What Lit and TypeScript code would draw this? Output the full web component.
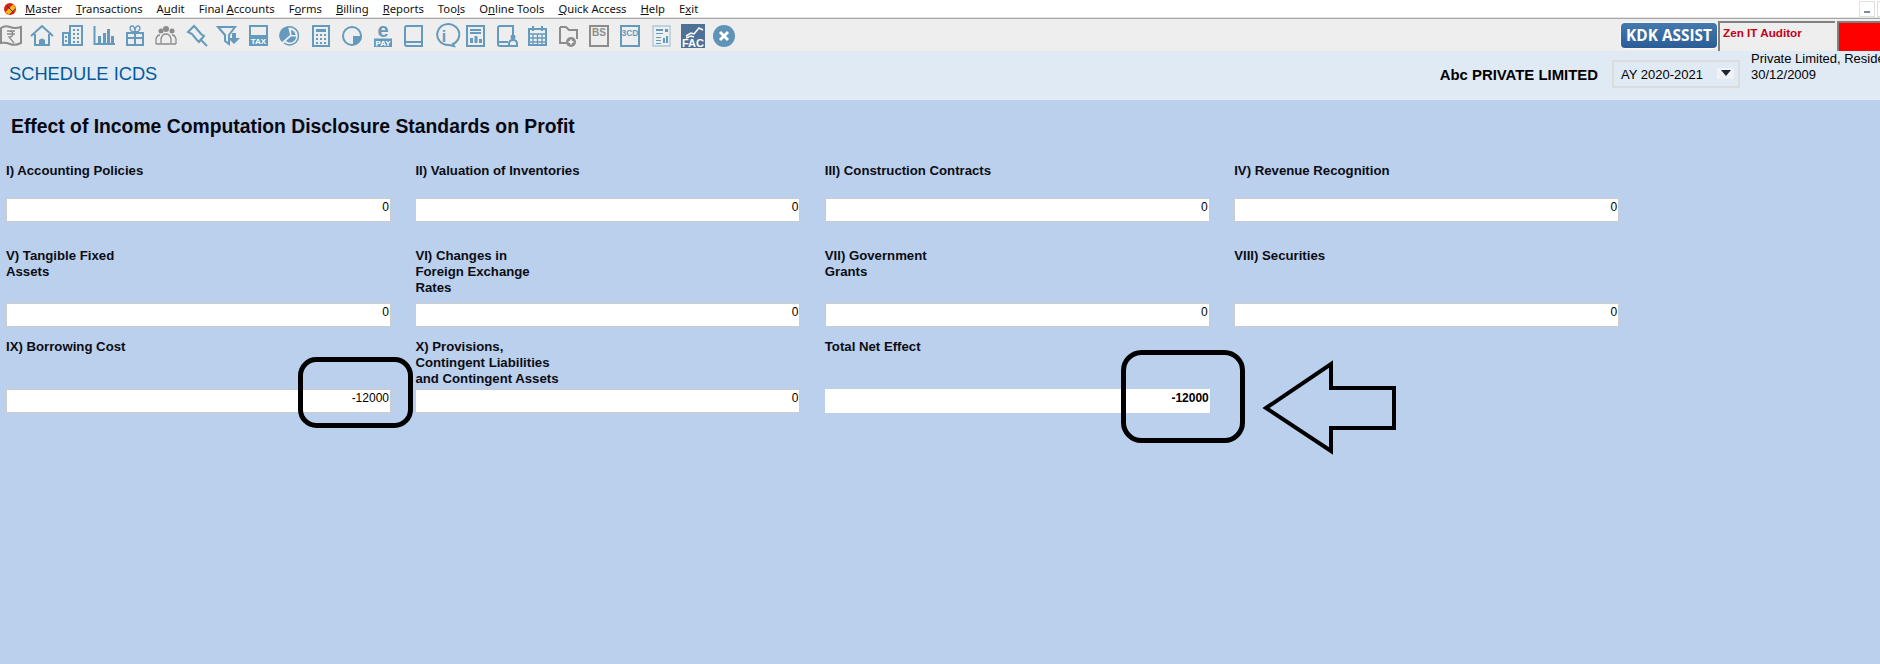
import { LitElement, html, css, svg } from "lit";
import { customElement } from "lit/decorators.js";

const menu: [string, string, string][] = [
  ["", "M", "aster"], ["", "T", "ransactions"], ["A", "u", "dit"], ["Final ", "A", "ccounts"],
  ["F", "o", "rms"], ["", "B", "illing"], ["", "R", "eports"], ["Too", "l", "s"],
  ["O", "n", "line Tools"], ["", "Q", "uick Access"], ["", "H", "elp"], ["E", "x", "it"],
];

const icons = [
  svg`<g class="g"><path d="M1 4Q5 1 10 3T21 3V19Q15 22 10 20T1 19Z"/><path class="thin" d="M7 7h8M7 10h8M9 7c5 0 5 6 0 6l5 6"/></g>`,
  svg`<g class="b"><path d="M0 12L11 2L22 12M4 10V21H18V10"/><path class="f" d="M8 21v-5q3-3 6 0v5z"/></g>`,
  svg`<g class="b"><path d="M1 9h6v12H1zM8 2h12v19H8z"/><path class="dots" d="M11 5h2v2h-2zM15 5h2v2h-2zM11 9h2v2h-2zM15 9h2v2h-2zM11 13h2v2h-2zM15 13h2v2h-2zM11 17h2v2h-2zM15 17h2v2h-2zM3 12h2v2H3zM3 16h2v2H3z"/></g>`,
  svg`<g class="b"><path d="M1.500 2V20H22"/><path class="f" d="M5 12h3v7H5zM10 9h3v10h-3zM14 5h3v14h-3zM18 12h3v7h-3z"/></g>`,
  svg`<g class="b"><path d="M3 9h16v12H3zM3 14h16M11 9v12"/><path class="thin" d="M11 8C5 8 5 2 8 2s3 4 3 6c0-2 0-6 3-6s3 6-3 6"/></g>`,
  svg`<g class="g"><circle class="f" cx="6" cy="7" r="2.500"/><circle class="f" cx="11" cy="5" r="3"/><circle class="f" cx="17" cy="7" r="2.500"/><path class="thin" d="M1 20v-5q1-4 4-4M21 20v-5q-1-4-4-4M1 20h20M6 19v-4q1-5 5-5t5 5v4"/></g>`,
  svg`<g class="b"><path d="M8 2L2 8L6 10L11 16L13 18L18 12L15 10L10 4Z"/><path d="M14 15L21 22"/></g>`,
  svg`<g class="b"><path d="M1 3H18L12 11V20L8 17V11Z"/><path class="f" d="M15 9h4v5h4l-6 6-6-6h4z"/></g>`,
  svg`<g class="b"><path d="M2 2h17v19H2z"/><path class="f" d="M2 11h17v10H2z"/><text class="wt" x="10.500" y="19.500" font-size="8">TAX</text></g>`,
  svg`<g class="b"><path class="thin2" d="M7 3.500A9 9 0 1 1 5 19"/><path class="f" d="M9 2.500A9 9 0 0 0 3 18L11 11ZM12 6A6 6 0 0 1 16.500 11L12.500 11Z"/><path class="f" d="M12 12.500L17 12.500A6 6 0 0 1 7 17z"/></g>`,
  svg`<g class="b"><path d="M3 2h16v20H3z"/><path class="f" d="M6 5h10v3H6z"/><path class="dots" d="M6 10h2v2H6zM10 10h2v2h-2zM14 10h2v2h-2zM6 14h2v2H6zM10 14h2v2h-2zM14 14h2v2h-2zM6 18h2v2H6zM10 18h2v2h-2zM14 18h2v2h-2z"/></g>`,
  svg`<g class="b"><circle cx="11" cy="12" r="9"/><path class="f" d="M12 12h9a9 9 0 0 1-9 9z"/></g>`,
  svg`<g class="b"><text class="be" x="11" y="13" font-size="20">e</text><path class="f" d="M2 14.500h18v8.500H2z"/><text class="wt" x="11" y="22" font-size="8">PAY</text></g>`,
  svg`<g class="b"><path d="M2 4q0-2 2-2h15v20H4q-2 0-2-2zM2 18h17"/></g>`,
  svg`<g class="b"><path d="M20 21A11 10.500 0 1 0 16 22L21 23Z" transform="translate(-1 -1)"/><text class="bt" x="10" y="18" font-size="16">i</text></g>`,
  svg`<g class="b"><path d="M2 2h17v20H2zM5 6h11M5 9h11"/><path class="f" d="M5 14h3v5H5zM9.500 12h3v7h-3zM14 15h3v4h-3z"/></g>`,
  svg`<g class="b"><path d="M13 22H4q-2 0-2-2V4q0-2 2-2h13v9M2 18h10"/><circle class="f" cx="17" cy="13" r="2.500"/><path d="M13 22v-2q0-4 4-4t4 4v2z"/></g>`,
  svg`<g class="b"><path d="M2 5h17v16H2z"/><path class="thin" d="M2 10h17M2 14h17M2 18h17M6 10v10M10.500 10v10M15 10v10"/><path d="M6 2v5M15 2v5"/></g>`,
  svg`<g class="g"><path d="M2 3h6l3 3h8v9M8 19H2V3"/><circle class="f" cx="13" cy="18" r="5"/><path class="wl" d="M10.500 18h5M13 15.500v5"/></g>`,
  svg`<g class="g"><path d="M1 2h18v20H1z"/><text class="gt" x="10" y="12" font-size="10">BS</text></g>`,
  svg`<g class="b"><path d="M1 2h18v20H1z"/><text class="bt" x="10" y="12" font-size="8.500">3CD</text></g>`,
  svg`<g class="b lite"><path class="thin" d="M2 2h17v20H2z"/><path class="f" d="M5 5h7v2H5zM5 9h7v1H5zM14 5h3v3h-3zM5 13h5v1H5zM5 16h5v1H5zM12 14h2v5h-2zM15 12h2v7h-2zM5 19h5v1H5z"/></g>`,
  svg`<g><path class="fac" d="M-1 0h24v24h-24z"/><path class="wl" d="M4 12l5-3 3 1 5-6 4 2M4 14l5-2 3 1"/><text class="wt" x="11" y="23" font-size="11">FAC</text></g>`,
  svg`<g><circle class="xc" cx="11" cy="12" r="11"/><path class="xl" d="M7 8l8 8M15 8l-8 8"/></g>`,
];

const rows = [
  { cls: "r1", cells: [["I) Accounting Policies", "0"], ["II) Valuation of Inventories", "0"], ["III) Construction Contracts", "0"], ["IV) Revenue Recognition", "0"]] },
  { cls: "r2", cells: [["V) Tangible Fixed\nAssets", "0"], ["VI) Changes in\nForeign Exchange\nRates", "0"], ["VII) Government\nGrants", "0"], ["VIII) Securities", "0"]] },
  { cls: "r3", cells: [["IX) Borrowing Cost", "-12000"], ["X) Provisions,\nContingent Liabilities\nand Contingent Assets", "0"], ["Total Net Effect", "-12000", "total"]] },
];

@customElement("app-root")
export class AppRoot extends LitElement {
  static styles = css`
    :host { display: block; width: 1880px; height: 664px; overflow: hidden; position: relative; background: #bad0ec; font-family: "Liberation Sans", Arial, sans-serif; color: #000; }
    .menubar { height: 17px; background: #fff; display: flex; align-items: center; position: relative; padding-left: 3px; }
    .logo { width: 14px; height: 14px; margin-right: 8px; flex: none; }
    .menu { display: flex; gap: 14px; font: 11.25px/17px "Noto Sans", sans-serif; color: #111; }
    .winbtns { margin-left: auto; display: flex; gap: 2px; align-self: flex-start; margin-top: 1px; width: 21px; overflow: hidden; }
    .winbtn { flex: none; width: 16px; height: 16px; box-sizing: border-box; border: 1px solid #e0e0e0; display: flex; align-items: flex-end; justify-content: center; padding-bottom: 3px; }
    .winbtn i { display: block; width: 6px; height: 2px; background: #7f8c99; }
    .sep { height: 1px; background: #e4e4e4; }
    .toolbar { height: 33px; box-sizing: border-box; background: #eee; border-top: 1px solid #a8a8a8; display: flex; position: relative; }
    .icons { display: flex; gap: 9px; padding-top: 5px; }
    .icons svg { width: 22px; height: 24px; overflow: visible; flex: none; }
    .tools-right { margin-left: auto; display: flex; align-items: stretch; padding-top: 2px; }
    .kdk { width: 96px; height: 25px; box-sizing: border-box; margin: 2px 1px 0 0; border-radius: 4px; background: linear-gradient(#4579ae, #2a5c96); color: #fff; font: 700 15.4px/25px "Open Sans", sans-serif; text-align: center; box-shadow: 0 0 0 1px #f6f8fb; white-space: nowrap; }
    .zen { width: 117px; margin-right: 2px; box-sizing: border-box; border-top: 2px solid #808080; border-left: 2px solid #808080; background: #eee; color: #c4001a; font: 700 11.7px/20px "Liberation Sans", sans-serif; padding-left: 3px; }
    .red { width: 43px; box-sizing: border-box; border-top: 2px solid #808080; border-left: 2px solid #808080; background: #f00; }
    .header { height: 49px; background: #e0eaf4; display: flex; align-items: flex-start; }
    .title { font-size: 18.3px; line-height: 22px; margin: 12px 0 0 9px; color: #005a9c; }
    .company { margin: 15px 14px 0 auto; font-size: 14.9px; font-weight: 700; line-height: 18px; white-space: nowrap; }
    .year { width: 128px; height: 28px; margin-top: 9px; box-sizing: border-box; border: 2px solid #dcdcdc; display: flex; align-items: center; justify-content: space-between; padding: 1px 4px 0 7px; font-size: 13px; }
    .arrow { width: 17px; height: 11px; background: #f0f2f7; display: flex; align-items: center; justify-content: center; margin-bottom: 3px; }
    .arrow i { width: 0; height: 0; border-left: 5px solid transparent; border-right: 5px solid transparent; border-top: 6px solid #1d2733; }
    .info { width: 129px; margin-left: 11px; font-size: 13px; line-height: 16px; white-space: nowrap; overflow: hidden; }
    .heading { font-size: 19.33px; font-weight: 700; line-height: 22px; margin: 16px 0 0 11px; color: #080810; }
    .rows { padding-left: 6px; }
    .row { display: grid; grid-template-columns: repeat(4, 385px); column-gap: 24.4px; }
    .r1 { height: 60px; margin-top: 24px; }
    .r2 { height: 80px; margin-top: 25px; }
    .r3 { height: 75px; margin-top: 11px; }
    .cell { display: flex; flex-direction: column; justify-content: space-between; }
    .label { font-size: 13.2px; font-weight: 700; line-height: 16px; margin-top: 1px; white-space: pre-line; color: #0c0c14; }
    .field { height: 24px; box-sizing: border-box; border: 1px solid #ccc; background: #fff; font-size: 12px; line-height: 14px; text-align: right; padding: 1px 1px 0 0; }
    .total .field { border: none; font-weight: 700; padding-top: 2px; }
    .annot { position: absolute; left: 0; top: 0; width: 1880px; height: 664px; pointer-events: none; }
    .annot * { fill: none; stroke: #000; }
    .g path, .g circle { fill: none; stroke: #8c8c8c; stroke-width: 2; }
    .b path, .b circle { fill: none; stroke: #649abd; stroke-width: 2; }
    .b .f, .g .f { fill: currentColor; stroke: none; }
    .b { color: #649abd; } .g { color: #8c8c8c; }
    .b .thin, .g .thin { stroke-width: 1.3; }
    .b .thin2 { stroke-width: 1.5; }
    .b .dots { fill: #649abd; stroke: none; }
    .lite .thin { stroke: #a9c7da; }
    .wl, .g .wl { fill: none; stroke: #fff; stroke-width: 1.5; }
    .wt, .be, .bt, .gt { font-family: "Liberation Sans", sans-serif; font-weight: 700; text-anchor: middle; }
    .wt { fill: #fff; }
    .be, .bt { fill: #649abd; }
    .gt { fill: #8c8c8c; }
    .fac { fill: #4f7196; }
    .xc { fill: #5f93b8; }
    .xl { stroke: #fff; stroke-width: 3; fill: none; }
  `;

  render() {
    return html`
      <div class="menubar">
        <svg class="logo" viewBox="0 0 14 14"><circle cx="7" cy="7" r="6" fill="#d8241c"/><path d="M3 11L11 3M5 12L12 5" stroke="#f2c21a" stroke-width="2"/><path d="M4 4l6 6" stroke="#333" stroke-width="1"/></svg>
        <div class="menu">${menu.map(([a, u, b]) => html`<span>${a}<u>${u}</u>${b}</span>`)}</div>
        <div class="winbtns"><div class="winbtn"><i></i></div><div class="winbtn"></div></div>
      </div>
      <div class="sep"></div>
      <div class="toolbar">
        <div class="icons">${icons.map((i) => html`<svg viewBox="0 0 22 24">${i}</svg>`)}</div>
        <div class="tools-right">
          <div class="kdk">KDK ASSIST</div>
          <div class="zen">Zen IT Auditor</div>
          <div class="red"></div>
        </div>
      </div>
      <div class="header">
        <div class="title">SCHEDULE ICDS</div>
        <div class="company">Abc PRIVATE LIMITED</div>
        <div class="year"><span>AY 2020-2021</span><div class="arrow"><i></i></div></div>
        <div class="info">Private Limited, Resident<br />30/12/2009</div>
      </div>
      <div class="heading">Effect of Income Computation Disclosure Standards on Profit</div>
      <div class="rows">
        ${rows.map((r) => html`<div class="row ${r.cls}">
          ${r.cells.map(([l, v, c]) => html`<div class="cell ${c ?? ""}"><div class="label">${l}</div><div class="field">${v}</div></div>`)}
        </div>`)}
      </div>
      <svg class="annot" viewBox="0 0 1880 664">
        <rect x="300.500" y="359.500" width="110" height="66" rx="16" stroke-width="5"/>
        <rect x="1123.500" y="352.500" width="119" height="88" rx="18" stroke-width="5"/>
        <path d="M1266 408L1331 364V388H1394V428H1331V451Z" stroke-width="4"/>
      </svg>
    `;
  }
}
